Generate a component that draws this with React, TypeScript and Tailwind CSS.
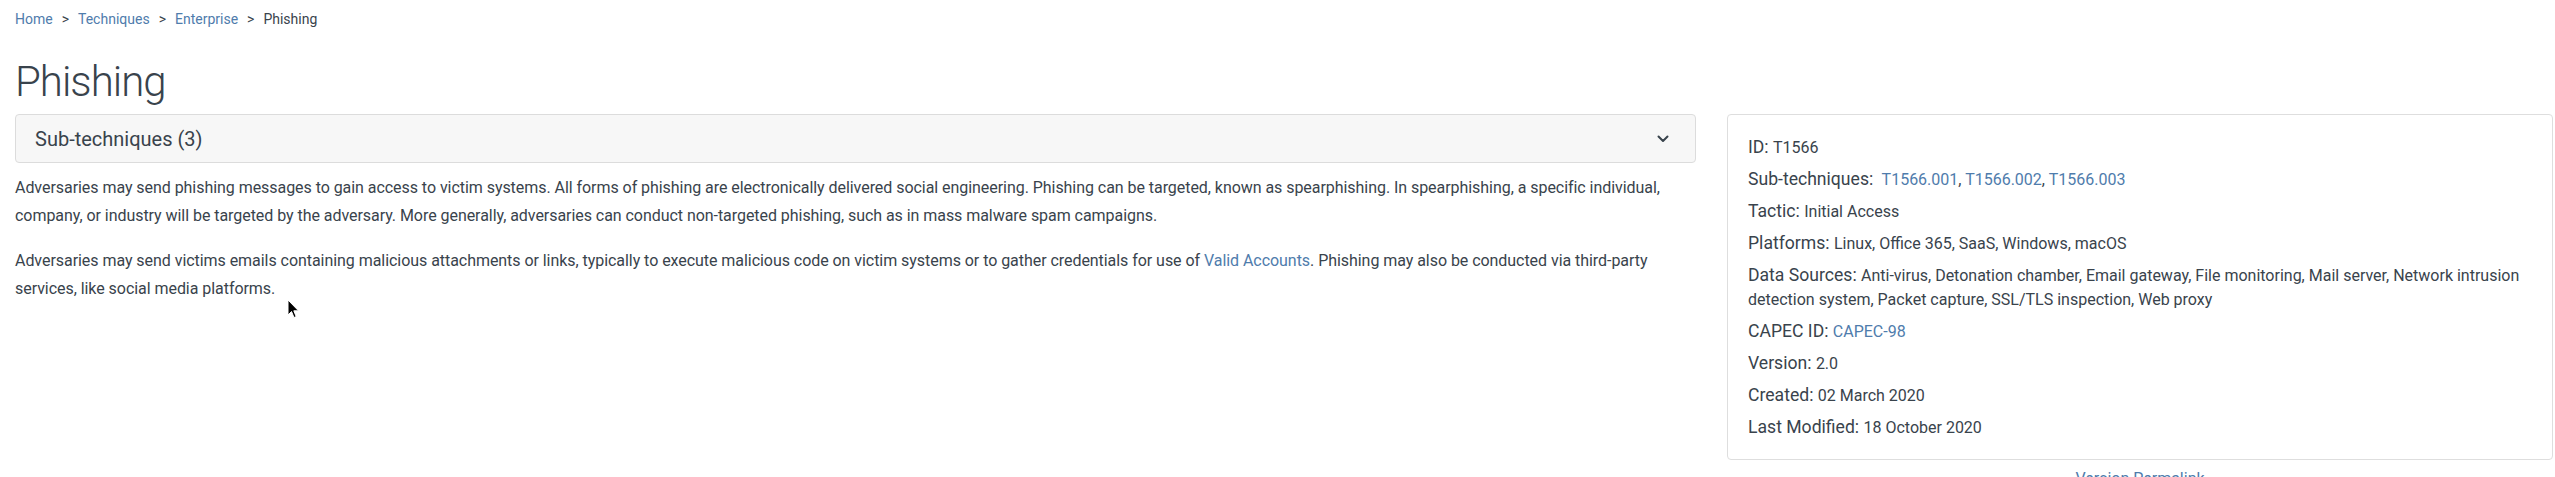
import React from "react";

const link = "text-[#4f7cac] no-underline";

function Breadcrumb() {
  return (
    <nav className="flex items-center text-[14px] leading-[20px]">
      <a className={link}>Home</a>
      <span className="px-[9px] text-[#39434c]">&gt;</span>
      <a className={link}>Techniques</a>
      <span className="px-[9px] text-[#39434c]">&gt;</span>
      <a className={link}>Enterprise</a>
      <span className="px-[9px] text-[#39434c]">&gt;</span>
      <span className="text-[#39434c]">Phishing</span>
    </nav>
  );
}

function InfoRow({ label, children }: { label: string; children: React.ReactNode }) {
  return (
    <div className="mb-[8px] text-[17.6px] leading-[24px]">
      <span>{label}: </span>
      <span className="text-[16px] leading-[16px]">{children}</span>
    </div>
  );
}

function Cursor() {
  return (
    <svg
      className="absolute left-[287px] top-[299px]"
      width="13"
      height="20"
      viewBox="0 0 13 20"
    >
      <path
        d="M1 1 L1 16 L4.5 12.5 L7 18.5 L9.2 17.6 L6.8 11.8 L11.5 11.8 Z"
        fill="#000"
        stroke="#fff"
        strokeWidth="1"
        strokeLinejoin="round"
      />
    </svg>
  );
}

export default function App() {
  return (
    <div className="relative min-h-screen bg-white text-[#39434c] font-['Roboto',sans-serif]">
      <div className="pl-[15px] pr-[2px] pt-[9px]">
        <Breadcrumb />

        <h1 className="mt-[28px] mb-[7px] text-[42px] leading-[50px] font-light tracking-[-1px]">
          Phishing
        </h1>

        <div className="flex gap-[31px]">
          {/* main column */}
          <div className="w-[1681px] shrink-0">
            <div className="flex h-[49px] items-center justify-between rounded-[4px] border border-[#dcdcdc] bg-[#f7f7f7] pl-[19px] pr-[26px]">
              <span className="text-[20px]">Sub-techniques (3)</span>
              <svg width="12" height="8" viewBox="0 0 12 8" fill="none">
                <path
                  d="M1.5 1.5 L6 6 L10.5 1.5"
                  stroke="#39434c"
                  strokeWidth="2"
                  strokeLinecap="round"
                  strokeLinejoin="round"
                />
              </svg>
            </div>

            <div className="mt-[11px] text-[16px] leading-[28px] tracking-[-0.05px]">
              <p className="mb-[17px]">
                Adversaries may send phishing messages to gain access to victim systems. All forms of
                phishing are electronically delivered social engineering. Phishing can be targeted,
                known as spearphishing. In spearphishing, a specific individual, company, or industry
                will be targeted by the adversary. More generally, adversaries can conduct
                non-targeted phishing, such as in mass malware spam campaigns.
              </p>
              <p>
                Adversaries may send victims emails containing malicious attachments or links,
                typically to execute malicious code on victim systems or to gather credentials for use
                of <a className={link}>Valid Accounts</a>. Phishing may also be conducted via
                third-party services, like social media platforms.
              </p>
            </div>
          </div>

          {/* side card */}
          <div className="w-[826px] shrink-0">
            <div className="rounded-[4px] border border-[#dedede] bg-white px-[20px] pt-[20px] pb-[12px]">
              <InfoRow label="ID">T1566</InfoRow>
              <InfoRow label="Sub-techniques">
                {"\u00a0"}
                <a className={link}>T1566.001</a>, <a className={link}>T1566.002</a>,{" "}
                <a className={link}>T1566.003</a>
              </InfoRow>
              <InfoRow label="Tactic">Initial Access</InfoRow>
              <InfoRow label="Platforms">Linux, Office 365, SaaS, Windows, macOS</InfoRow>
              <InfoRow label="Data Sources">
                Anti-virus, Detonation chamber, Email gateway, File monitoring, Mail server, Network
                intrusion detection system, Packet capture, SSL/TLS inspection, Web proxy
              </InfoRow>
              <InfoRow label="CAPEC ID">
                <a className={link}>CAPEC-98</a>
              </InfoRow>
              <InfoRow label="Version">2.0</InfoRow>
              <InfoRow label="Created">02 March 2020</InfoRow>
              <InfoRow label="Last Modified">18 October 2020</InfoRow>
            </div>
            <div className="mt-[7px] text-center text-[16px] leading-[24px]">
              <a className={link}>Version Permalink</a>
            </div>
          </div>
        </div>
      </div>
      <Cursor />
    </div>
  );
}
